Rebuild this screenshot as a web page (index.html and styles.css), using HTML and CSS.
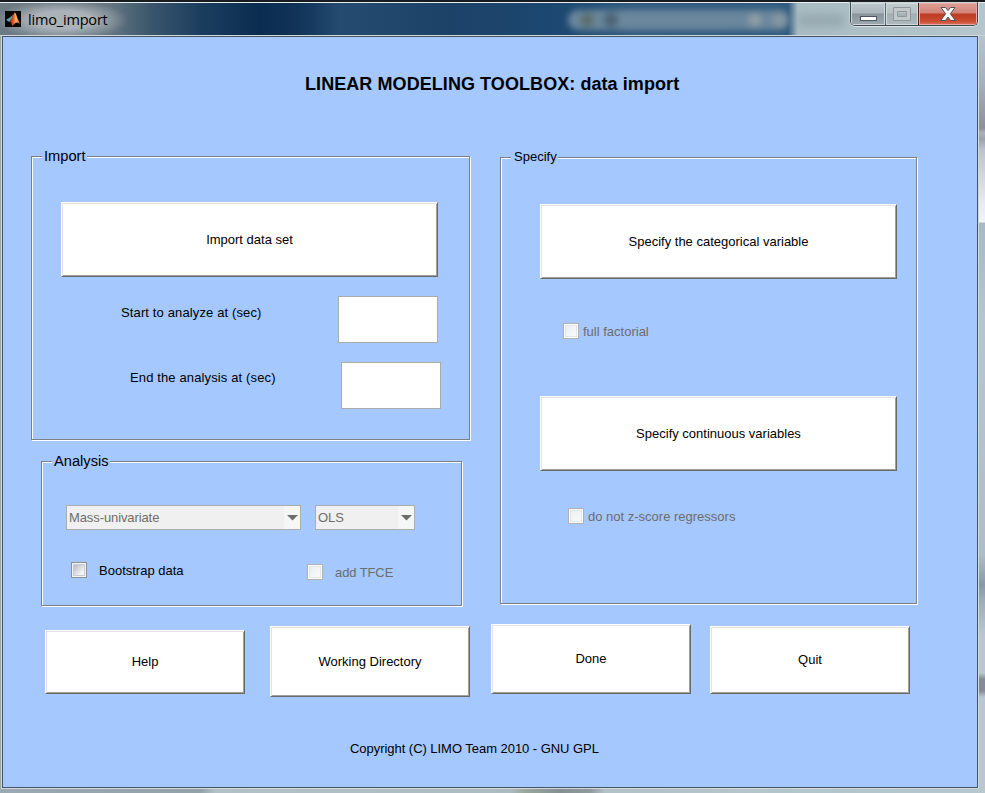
FILE: index.html
```
<!DOCTYPE html>
<html lang="en">
<head>
<meta charset="utf-8">
<title>limo_import</title>
<link rel="stylesheet" href="styles.css">
</head>
<body>
<div class="window">
  <header class="titlebar">
    <svg class="app-icon" width="16" height="16" viewBox="0 0 16 16">
      <defs>
        <linearGradient id="flame" x1="0" x2="1"><stop offset="0" stop-color="#70201a"/><stop offset=".45" stop-color="#ed651f"/><stop offset=".62" stop-color="#ffc06a"/><stop offset="1" stop-color="#c93c12"/></linearGradient>
      </defs>
      <rect width="16" height="16" fill="#070707"/>
      <path d="M1 8.7 5 6.5 8 3.8 6.4 9.6 4.3 11Z" fill="#54a8bd"/>
      <path d="M4 11 7 6.2 9.6 1.5 10.7 2.2 12.2 6.5 15.2 13 12.3 11.5 10.5 11.8 7.3 15 6.2 11.5Z" fill="url(#flame)"/>
    </svg>
    <h1 class="caption">limo_import</h1>
    <div class="backdrop-toolbar"></div>
    <div class="backdrop-search"></div>
    <div class="controls">
      <span class="control minimize"><svg width="18" height="6"><rect x=".5" y=".5" width="16" height="4" fill="#fff" stroke="#4c5662"/></svg></span>
      <span class="control maximize"><svg width="18" height="14"><path d="M.5.5h17v13H.5ZM4.500 4.500v5h9v-5Z" fill="#c2c8ca" fill-rule="evenodd" stroke="#8f999d"/></svg></span>
      <span class="control close"><svg width="16" height="14" viewBox="0 0 16 14"><path d="M1 .5h4.500L8 3.600 10.500.5H15l-4.600 6.300 4.900 6.700h-4.700L8 10.100 5.400 13.500H.7l4.900-6.700Z" fill="#f5f5f5" stroke="#51535e"/></svg></span>
    </div>
  </header>
  <main class="client">
    <h2 class="heading"><span>LINEAR MODELING TOOLBOX: data import</span></h2>
    <div class="panels">
      <div class="left">
        <section class="panel import">
          <h3 class="legend"><span>Import</span></h3>
          <button class="push">Import data set</button>
          <label class="row start"><span>Start to analyze at (sec)</span><input type="text"></label>
          <label class="row end"><span>End the analysis at (sec)</span><input type="text"></label>
        </section>
        <section class="panel analysis">
          <h3 class="legend"><span>Analysis</span></h3>
          <div class="combos">
            <div class="combo method"><span>Mass-univariate</span><i><svg width="11" height="6"><path d="M0 0h11L5.500 5.500Z"/></svg></i></div>
            <div class="combo solver"><span>OLS</span><i><svg width="11" height="6"><path d="M0 0h11L5.500 5.500Z"/></svg></i></div>
          </div>
          <div class="options">
            <div class="check bootstrap"><b></b><span>Bootstrap data</span></div>
            <div class="check disabled tfce"><b></b><span>add TFCE</span></div>
          </div>
        </section>
      </div>
      <section class="panel specify">
        <h3 class="legend"><span>Specify</span></h3>
        <button class="push">Specify the categorical variable</button>
        <div class="check disabled factorial"><b></b><span>full factorial</span></div>
        <button class="push">Specify continuous variables</button>
        <div class="check disabled zscore"><b></b><span>do not z-score regressors</span></div>
      </section>
    </div>
    <div class="actions">
      <button class="push help">Help</button>
      <button class="push directory">Working Directory</button>
      <button class="push done">Done</button>
      <button class="push quit">Quit</button>
    </div>
    <p class="copyright"><span>Copyright (C) LIMO Team 2010 - GNU GPL</span></p>
  </main>
</div>
</body>
</html>
```
FILE: styles.css
```
* { box-sizing: border-box; }
body {
  margin: 0;
  font: 13px/16px "Liberation Sans", Arial, sans-serif;
  color: #000;
}
h1, h2, h3, p { margin: 0; font-weight: normal; }
.window {
  width: 985px;
  height: 793px;
  overflow: hidden;
  padding: 0 7px 0 2px;
  background:
    linear-gradient(#b5c5cc 0, #a3b1b8 50px, #8b9297 93px, #a9b4ba 98px, #99a3a9 104px, #bbc5ca 115px, #e4e9eb 165px, #f0f4f6 187px, #a6bac2 188px, #b4c7cc 290px, #afc1c6 480px, #adbdc3 520px, #879ba5 550px, #9fb0b7 568px, #b8c8ce 600px, #b8c8ce 638px, #848d94 644px, #848d94 656px, #b8c8ce 662px) right 35px / 8px 758px no-repeat,
    linear-gradient(90deg, #9aa9b2, #93a1a9 200px, #b3c0c7 215px, #acbac2 510px, #9aa89b 525px, #858f94 560px, #8f9a9f 590px, #b3c2c8 605px, #b6c7cf) 0 100% / 100% 5px no-repeat,
    #9aaaa5;
}
.titlebar {
  display: flex;
  align-items: flex-start;
  height: 36px;
  margin: 0 -7px 0 -2px;
  padding-left: 5px;
  border-bottom: 1px solid #c6d2d8;
  background:
    linear-gradient(#181c1e 0 2px, #e9eef0 2px 3px, transparent 3px),
    radial-gradient(ellipse 66px 20px at 62px 20px, #abb2b8 0 45%, #abb2b800),
    linear-gradient(90deg, #6d7b84, #657681 110px, #3b566c 150px, #1c3e5e 200px, #0a2c50 260px, #113459 300px, #254b70 340px, #1d4268 450px, #1c4871 560px, #315b7e 630px, #315c80 788px, #a9bdc3 798px, #b5c5cb);
}
.app-icon { margin-top: 11px; flex: none; }
.caption {
  width: 80px;
  margin: 10px 0 0 7px;
  font: 14.500px/20px "Open Sans", sans-serif;
  letter-spacing: -.18px;
  white-space: nowrap;
}
.backdrop-toolbar {
  width: 222px;
  height: 20px;
  margin: 10px 0 0 460px;
  border-radius: 10px;
  filter: blur(3px);
  background:
    radial-gradient(circle at 19px 10px, #586c66 0 4px, transparent 9px),
    radial-gradient(circle at 43px 10px, #4b6273 0 5px, transparent 9px),
    radial-gradient(circle at 187px 10px, #91a0a5 0 4px, transparent 9px),
    radial-gradient(circle at 211px 10px, #8799a3 0 4px, transparent 9px),
    #6b879d;
}
.backdrop-search {
  width: 46px;
  height: 13px;
  margin: 14px 0 0 8px;
  filter: blur(4px);
  background: #98a9b1;
}
.controls {
  display: flex;
  width: 128px;
  height: 24px;
  margin: 2px 0 0 6px;
  border: 1px solid #3c464d;
  border-top-color: #d0d6d9;
  border-radius: 0 0 5px 5px;
  overflow: hidden;
  box-shadow: 0 1px 0 #dde4e7, -1px 0 0 #c5d0d6, 1px 0 0 #dde4e7;
}
.control {
  display: flex;
  justify-content: center;
  width: 35px;
  background: linear-gradient(#bdc9cf, #a9b5bb 10px, #89959c 11px, #9da9af);
  box-shadow: inset 0 0 0 1px #d0d9dd;
}
.minimize svg { margin: 13px 0 0 1px; }
.maximize {
  width: 33px;
  border-left: 1px solid #59656d;
  background: linear-gradient(#c3cccf, #b6c0c3 10px, #a4afb3 11px, #b0babe);
}
.maximize svg { margin-top: 4px; }
.close {
  width: 60px;
  border-left: 1px solid #571e19;
  background: linear-gradient(#dda198, #d18376 10px, #bd3a21 11px, #c94b30 18px, #d9765d);
  box-shadow: inset 0 0 0 1px #e5aaa0;
}
.close svg { margin-top: 4px; }
.client {
  width: 976px;
  height: 752px;
  border: 1px solid #475366;
  background: #a4c8ff;
  box-shadow: 0 0 0 1px #d1d9db;
}
.heading {
  margin: 37px 0 0 302px;
  font-size: 18px;
  line-height: 20px;
  font-weight: bold;
  letter-spacing: .07px;
  white-space: nowrap;
}
.panels { display: flex; height: 513px; padding: 61px 0 0 28px; }
.left { width: 469px; }
.panel {
  border: 1px solid #7b8087;
  box-shadow: 1px 1px 0 #fff, inset 1px 1px 0 #fff;
}
.legend {
  width: max-content;
  height: 16px;
  margin: -9px 0 0 10px;
  padding: 0 1px 0 2px;
  background: #a4c8ff;
  font-size: 14.670px;
}
.push {
  display: block;
  padding: 0;
  border: 1px solid;
  border-color: #fff #696969 #696969 #fff;
  box-shadow: inset 1px 1px 0 #e3e3e3, inset -1px -1px 0 #a0a0a0;
  background: #fff;
  color: #000;
  font: inherit;
}
.import { width: 439px; height: 284px; margin-top: 1px; }
.import .push { width: 377px; height: 75px; margin: 38px 0 0 29px; }
.row { display: flex; justify-content: space-between; white-space: nowrap; }
.row input {
  width: 100px;
  height: 47px;
  padding: 2px;
  border: 1px solid #ababab;
  background: #fff;
}
.row span { margin-top: 9px; letter-spacing: .13px; }
.start { width: 317px; margin: 19px 0 0 89px; }
.end { width: 311px; margin: 19px 0 0 98px; }
.end span { margin-top: 8px; }
.analysis { width: 421px; height: 145px; margin: 21px 0 0 10px; }
.combos { display: flex; gap: 14px; margin: 36px 0 0 24px; }
.combo {
  display: flex;
  justify-content: space-between;
  align-items: center;
  height: 25px;
  padding-left: 2px;
  border: 1px solid #adadad;
  background: #f0f0f0;
  color: #6d6d6d;
}
.method { width: 235px; letter-spacing: -.1px; }
.solver { width: 100px; }
.combo i {
  display: flex;
  align-items: center;
  justify-content: center;
  width: 16px;
  height: 23px;
  background: #f6f6f6;
}
.combo svg { flex: none; fill: #6d6d6d; }
.options { display: flex; margin: 31px 0 0 29px; }
.check { display: flex; align-items: center; height: 18px; white-space: nowrap; }
.check span { margin-top: 2px; }
.check b {
  width: 16px;
  height: 16px;
  border: 1px solid #8e8f8f;
  background: linear-gradient(135deg, #b8bbc6, #f5f5f6 80%) content-box;
  padding: 2px;
  box-shadow: inset 0 0 0 1px #f4f4f4, inset 0 0 0 2px #c9ccd3;
  background-color: #f4f4f4;
}
.disabled { color: #6d6d6d; }
.disabled b {
  border-color: #b1b1b1;
  background: linear-gradient(135deg, #eceef1, #fafafa) content-box;
  background-color: #fff;
  box-shadow: inset 0 0 0 1px #fff, inset 0 0 0 2px #e4e6ea;
}
.bootstrap { width: 236px; gap: 12px; }
.tfce { gap: 12px; margin-top: 2px; letter-spacing: -.1px; }
.specify { width: 417px; height: 447px; margin-top: 2px; }
.specify .legend { padding-left: 3px; font-size: 13px; }
.specify .push { width: 357px; height: 75px; margin-left: 39px; }
.specify .legend + .push { margin-top: 39px; }
.factorial { gap: 4px; margin: 43px 0 56px 62px; }
.zscore { gap: 4px; margin: 36px 0 0 67px; }
.actions { display: flex; height: 73px; margin: 17px 0 0 42px; }
.actions .push { width: 200px; }
.actions .help { height: 64px; margin-top: 6px; }
.actions .directory { height: 71px; margin: 2px 0 0 25px; }
.actions .done { height: 70px; margin-left: 21px; }
.actions .quit { height: 68px; margin: 2px 0 0 19px; }
.copyright { margin: 44px 0 0 347px; letter-spacing: -.04px; white-space: nowrap; }
```
